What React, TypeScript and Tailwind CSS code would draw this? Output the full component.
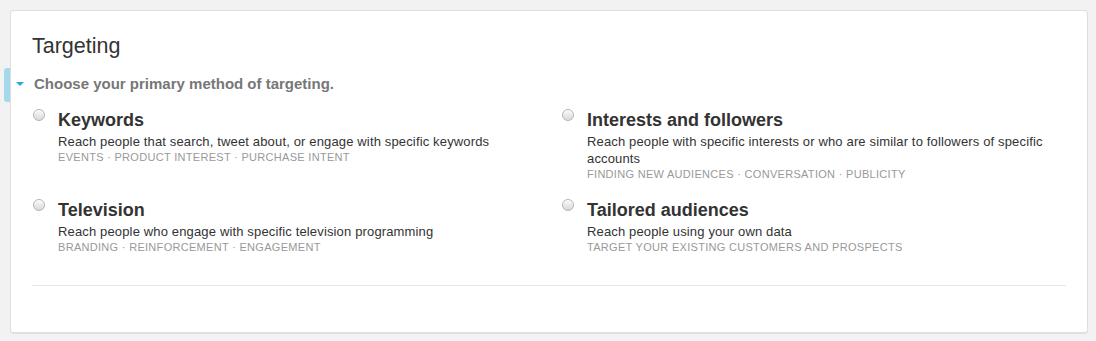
const options = [
  {
    title: 'Keywords',
    desc: 'Reach people that search, tweet about, or engage with specific keywords',
    tags: 'EVENTS · PRODUCT INTEREST · PURCHASE INTENT',
  },
  {
    title: 'Interests and followers',
    desc: 'Reach people with specific interests or who are similar to followers of specific accounts',
    tags: 'FINDING NEW AUDIENCES · CONVERSATION · PUBLICITY',
  },
  {
    title: 'Television',
    desc: 'Reach people who engage with specific television programming',
    tags: 'BRANDING · REINFORCEMENT · ENGAGEMENT',
  },
  {
    title: 'Tailored audiences',
    desc: 'Reach people using your own data',
    tags: 'TARGET YOUR EXISTING CUSTOMERS AND PROSPECTS',
  },
];

function Radio() {
  return (
    <span className="ml-[1px] h-3 w-3 shrink-0 rounded-full border border-[#b3b3b3] bg-gradient-to-b from-[#fafafa] to-[#d9d9d9] shadow-[inset_0_1px_0_#fff]" />
  );
}

export default function App() {
  return (
    <div
      className="min-h-[341px] bg-[#f2f2f2] py-[10px] pl-[10px] pr-[8px]"
      style={{ fontFamily: '"Liberation Sans", Arial, sans-serif' }}
    >
      <div className="relative rounded-[4px] border border-[#dedede] border-b-2 border-b-[#e2e0dc] bg-white px-[21px] pt-[22px] pb-[46px]">
        {/* selected section marker */}
        <span className="absolute -left-[7px] top-[57px] h-[34px] w-[6px] rounded-l-[3px] bg-[#a6d8ec]" />

        <h1 className="text-[21.5px] leading-[26px] text-[#333]">Targeting</h1>

        <div className="mt-4 flex items-center">
          <svg className="-ml-[16px] mr-[10px] mb-[1px]" width="8" height="4" viewBox="0 0 8 4">
            <polygon points="0,0 8,0 4,4" fill="#2ba6de" />
          </svg>
          <p className="text-[15px] font-bold leading-[18px] text-[#777]">
            Choose your primary method of targeting.
          </p>
        </div>

        <div className="mt-4 grid grid-cols-2 gap-x-6 gap-y-[18px]">
          {options.map((o) => (
            <label key={o.title} className="flex gap-[13px]">
              <Radio />
              <div>
                <div className="text-[18px] font-bold leading-[22px] text-[#333]">{o.title}</div>
                <div className="mt-[2px] text-[13px] leading-[17px] tracking-[0.15px] text-[#333]">{o.desc}</div>
                <div className="text-[11px] leading-[14px] tracking-[0.3px] text-[#999]">{o.tags}</div>
              </div>
            </label>
          ))}
        </div>

        <div className="mt-[31px] h-px bg-[#e8e8e8]" />
      </div>
    </div>
  );
}
